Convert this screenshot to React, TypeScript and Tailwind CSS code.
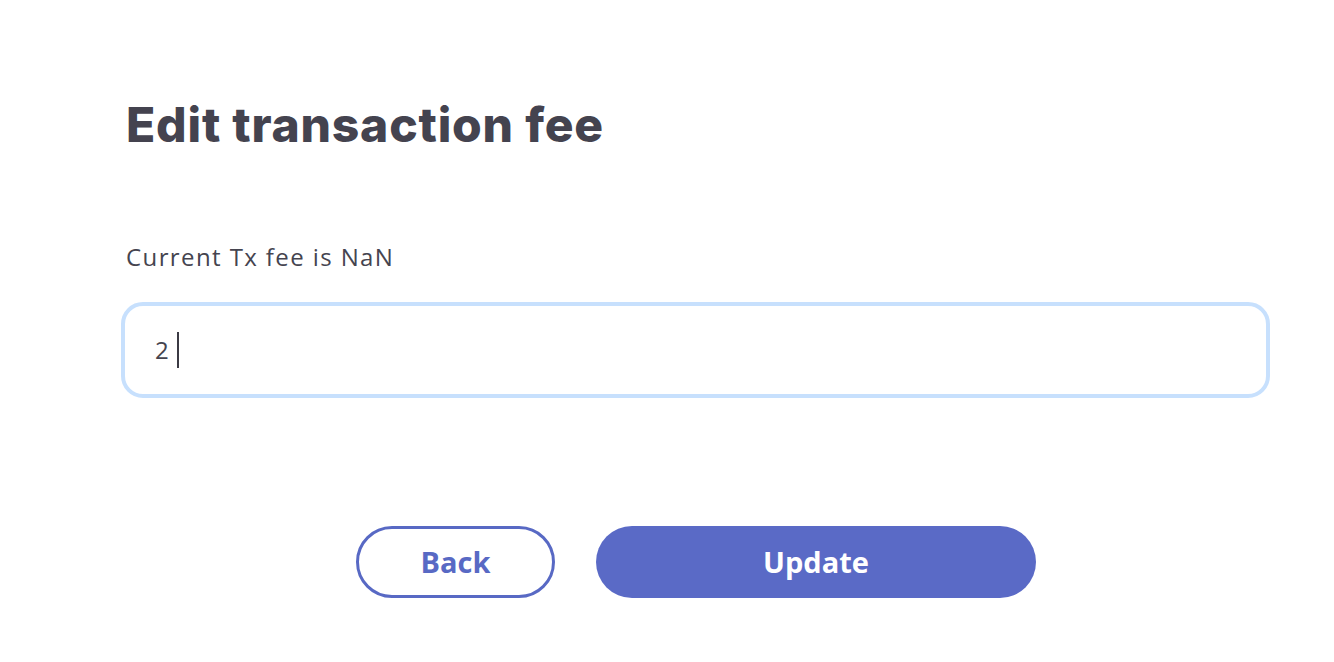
export default function App() {
  return (
    <div className="w-[1334px] h-[662px] bg-white font-['Open_Sans','Noto_Sans',sans-serif] text-[#45444f]">
      <div className="pl-[126px] pr-[64px] pt-[96px]">
        <h1 className="text-[48px] leading-[58px] font-extrabold tracking-[0.8px] font-['Inter',sans-serif] text-[#44434f]">
          Edit transaction fee
        </h1>
        <p className="mt-[88px] text-[24px] leading-[30px] tracking-[1.4px] text-[#45444f]">Current Tx fee is NaN</p>
        <div className="mt-[30px] -ml-[5px]">
          <div className="w-[1149px] h-[96px] rounded-[22px] border-[4px] border-[#c7e0fd] pl-[30px] flex items-center text-[24px] text-[#45444f]">
            <span>2</span>
            <span className="ml-[8px] w-[2px] h-[36px] bg-[#3b3a44]" />
          </div>
        </div>
        <div className="mt-[128px] flex gap-[41px] pl-[230px]">
          <button className="w-[199px] h-[72px] rounded-full border-[3px] border-[#5869c4] text-[#5869c4] text-[29px] font-bold">
            Back
          </button>
          <button className="w-[440px] h-[72px] rounded-full bg-[#5a6ac6] text-white text-[29px] font-bold">
            Update
          </button>
        </div>
      </div>
    </div>
  );
}
